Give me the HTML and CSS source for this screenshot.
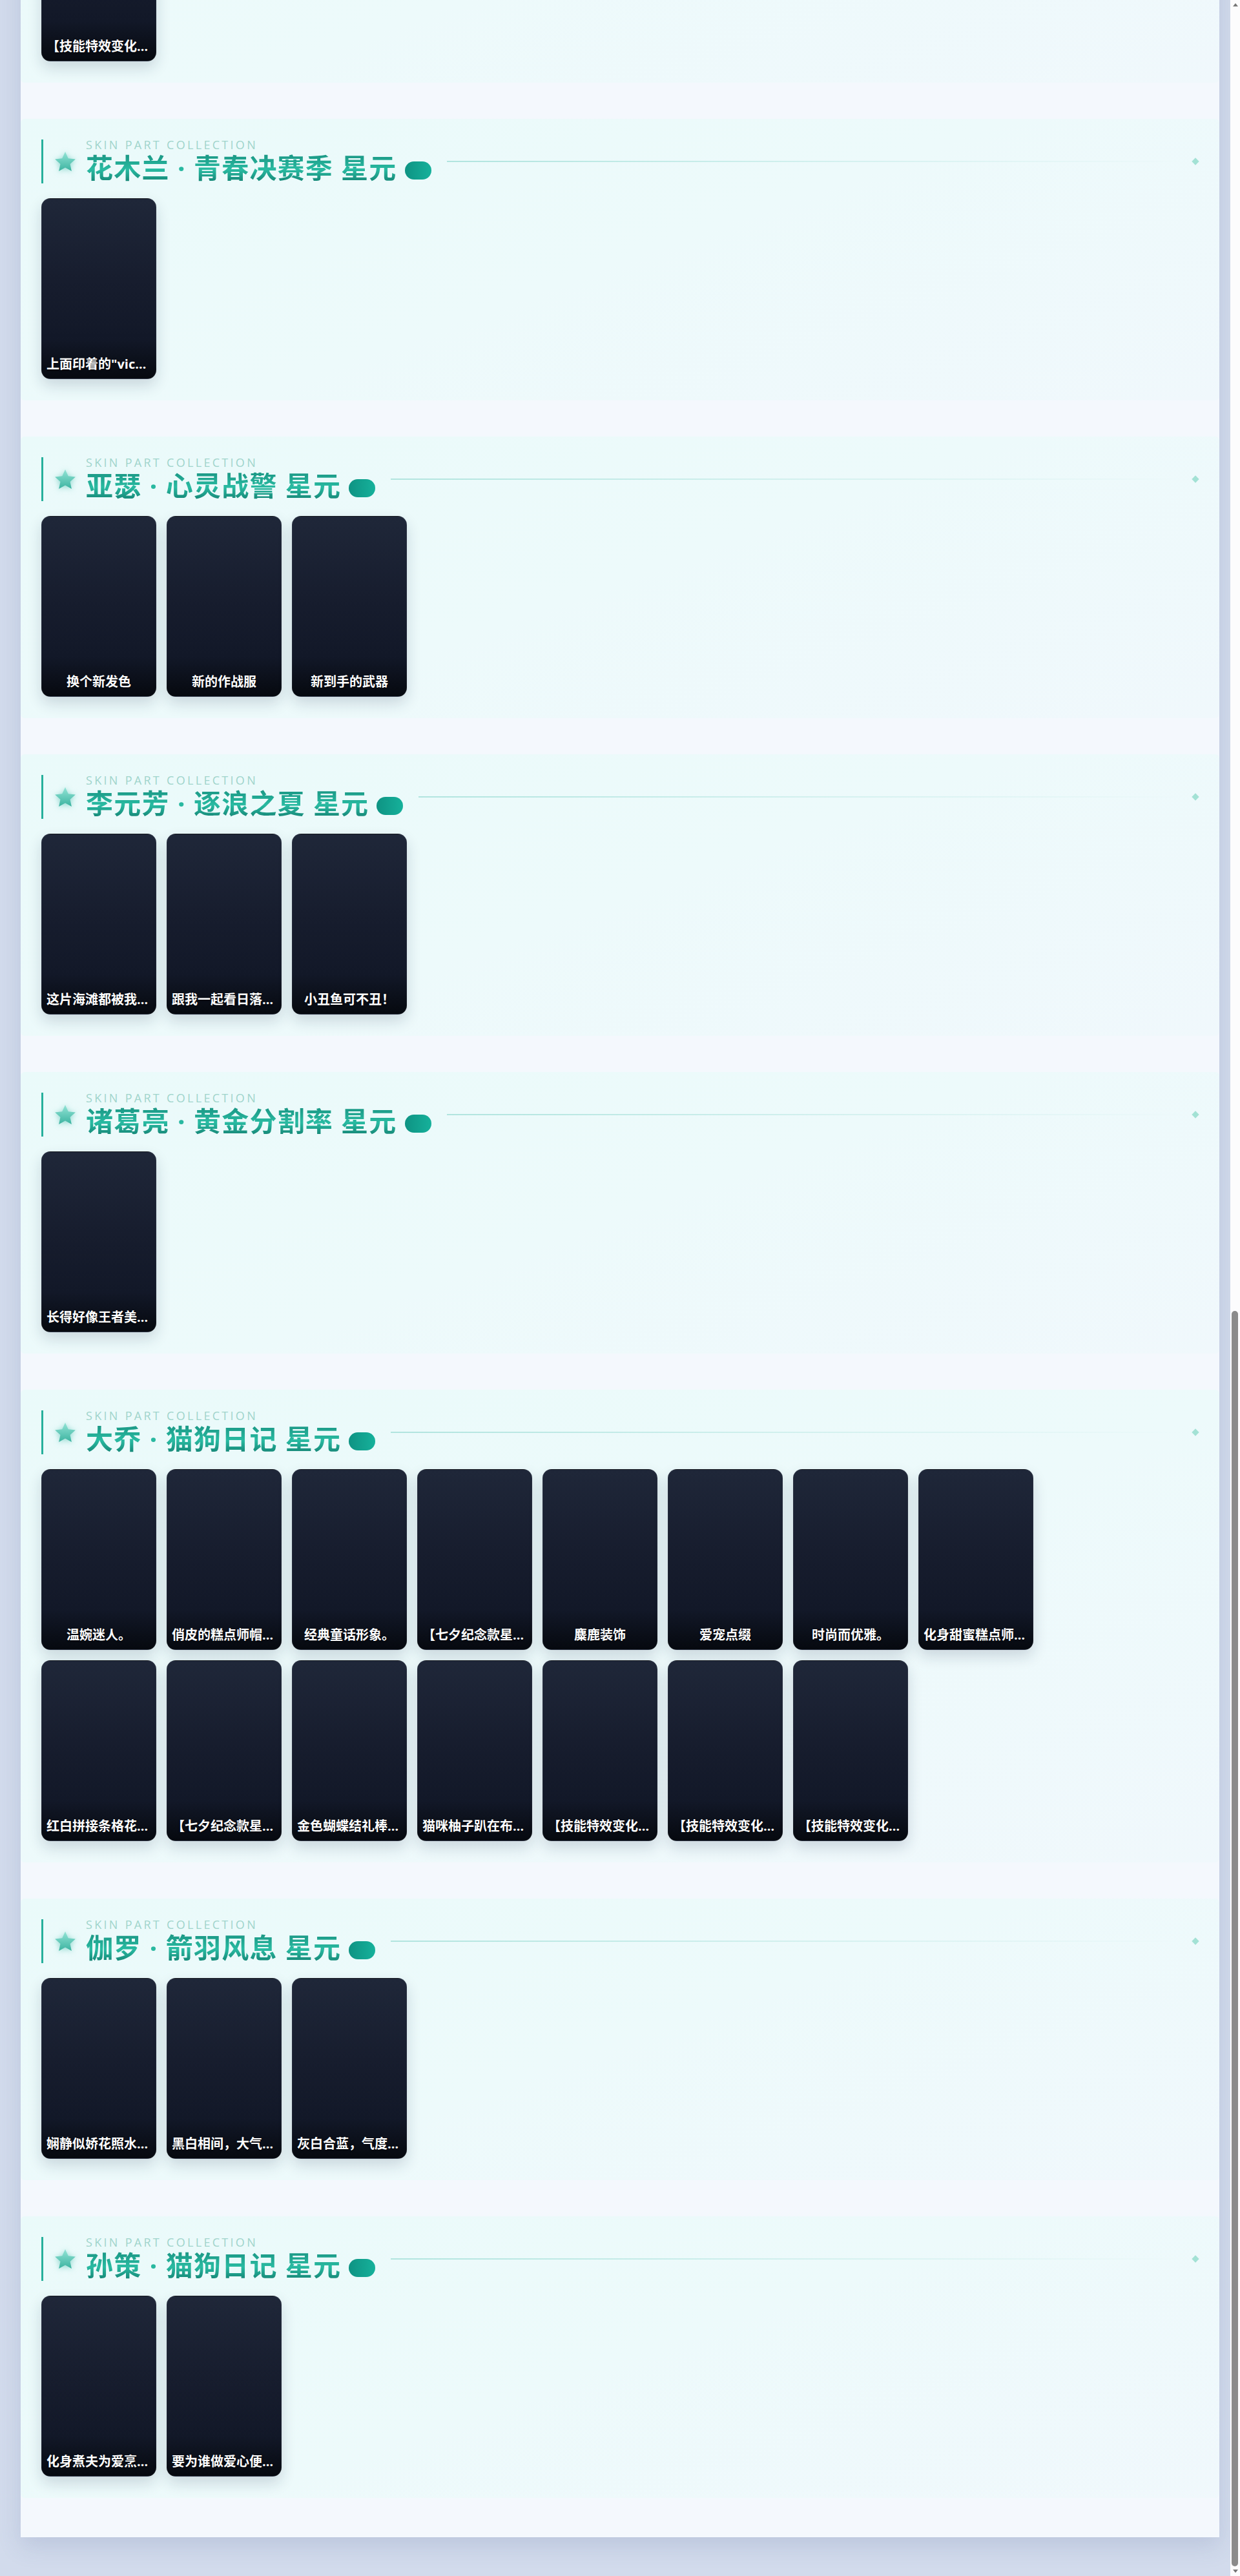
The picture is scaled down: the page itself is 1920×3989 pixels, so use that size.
FILE: index.html
```html
<!DOCTYPE html>
<html lang="zh-CN">
<head>
  <meta charset="UTF-8" />
  <meta name="viewport" content="width=device-width, initial-scale=1.0" />
  <title>星元部件图鉴</title>
  <link rel="stylesheet" href="styles.css">
</head>
<body>
  <!-- 星星图标共用的渐变 -->
  <svg class="defs" width="0" height="0" aria-hidden="true">
    <defs>
      <linearGradient id="starFill" x1="0" y1="0" x2="0" y2="1">
        <stop offset="0" stop-color="#93e4d6" />
        <stop offset="1" stop-color="#3cb3a0" />
      </linearGradient>
    </defs>
  </svg>

  <main class="panel" id="panel"></main>

  <!-- 自绘滚动条 -->
  <div class="scroll-rail" aria-hidden="true">
    <i class="scroll-arrow up"></i>
    <div class="scroll-track"><div class="scroll-thumb" id="thumb"></div></div>
    <i class="scroll-arrow down"></i>
  </div>

  <script>
    const panel = document.getElementById("panel");
    const thumb = document.getElementById("thumb");

    // 星元皮肤与部件列表
    const skins = [
      { title: "孙尚香 · 杀手不太冷 星元", parts: ["俏皮的猫耳发箍", "帅气的黑色风衣", "专属武器外观"] },
      { title: "貂蝉 · 仲夏夜之梦 星元", parts: ["梦幻的花瓣发饰", "轻盈的仙子长裙"] },
      { title: "小乔 · 缤纷独角兽 星元", parts: ["可爱的独角兽头饰", "彩虹色的蓬蓬裙", "星星魔法棒"] },
      { title: "王昭君 · 偶像歌手 星元", parts: ["闪亮的舞台发型", "华丽的演出服", "专属麦克风"] },
      { title: "李白 · 千年之狐 星元", parts: ["飘逸的狐狸面具", "青色长袍", "【技能特效变化】一技能"] },
      { title: "甄姬 · 游园惊梦 星元", parts: ["典雅的发簪", "水袖戏服", "折扇", "团扇", "珠花步摇", "云肩", "绣鞋", "【技能特效变化】一技能", "【技能特效变化】二技能"] },
      { title: "鲁班七号 · 电玩小子 星元", parts: ["炫酷的耳机", "游戏手柄", "像素风外套"] },
      { title: "公孙离 · 蜜橘之夏 星元", parts: ["【技能特效变化】大招"] },
      { title: "花木兰 · 青春决赛季 星元", parts: ['上面印着的"victory"字样'] },
      { title: "亚瑟 · 心灵战警 星元", parts: ["换个新发色", "新的作战服", "新到手的武器"] },
      { title: "李元芳 · 逐浪之夏 星元", parts: ["这片海滩都被我承包了", "跟我一起看日落的美景", "小丑鱼可不丑！"] },
      { title: "诸葛亮 · 黄金分割率 星元", parts: ["长得好像王者美少年"] },
      {
        title: "大乔 · 猫狗日记 星元",
        parts: [
          "温婉迷人。", "俏皮的糕点师帽子造型", "经典童话形象。", "【七夕纪念款星元】粉色爱心",
          "麋鹿装饰", "爱宠点缀", "时尚而优雅。", "化身甜蜜糕点师傅们",
          "红白拼接条格花裙子", "【七夕纪念款星元】蝴蝶结", "金色蝴蝶结礼棒魔杖", "猫咪柚子趴在布偶上",
          "【技能特效变化】一技能", "【技能特效变化】二技能", "【技能特效变化】大招"
        ]
      },
      { title: "伽罗 · 箭羽风息 星元", parts: ["娴静似娇花照水，行动如弱柳扶风", "黑白相间，大气优雅", "灰白合蓝，气度不凡"] },
      { title: "孙策 · 猫狗日记 星元", parts: ["化身煮夫为爱烹饪美食", "要为谁做爱心便当呢"] }
    ];

    const starIcon = `
      <svg class="skin-star" viewBox="2.5 2.5 19 17.9" aria-hidden="true">
        <path d="M12 2.5l2.8 6.1 6.7.7-5 4.5 1.4 6.6L12 17.1l-5.9 3.3 1.4-6.6-5-4.5 6.7-.7z" fill="url(#starFill)" />
      </svg>`;

    function renderSkins() {
      panel.innerHTML = skins.map(skin => `
        <section class="skin">
          <div class="skin-head">
            <div class="skin-mark">
              ${starIcon}
              <div class="skin-titles">
                <div class="skin-en">SKIN PART COLLECTION</div>
                <h2 class="skin-name"><span class="skin-name-text">${skin.title}</span><span class="skin-badge"></span></h2>
              </div>
            </div>
            <div class="skin-line"></div>
            <i class="skin-dot"></i>
          </div>
          <div class="skin-parts">
            ${skin.parts.map(p => `<div class="part"><span class="part-name">${p}</span></div>`).join("")}
          </div>
        </section>
      `).join("");
    }

    // 滚动条滑块的长度和位置
    function updateThumb() {
      const track = thumb.parentElement.clientHeight;
      const total = document.documentElement.scrollHeight;
      const view = window.innerHeight;
      const len = Math.max(24, track * view / total);
      const max = total - view;
      const top = max > 0 ? (track - len) * window.scrollY / max : 0;
      thumb.style.height = `${len}px`;
      thumb.style.top = `${top}px`;
    }

    // 打开后直接停在列表最底部
    function scrollToEnd() {
      window.scrollTo(0, document.documentElement.scrollHeight);
      updateThumb();
    }

    renderSkins();
    scrollToEnd();
    window.addEventListener("scroll", updateThumb);
    window.addEventListener("resize", updateThumb);
    window.addEventListener("load", scrollToEnd);
  </script>
</body>
</html>
```

FILE: styles.css
```css
html, body {
  margin: 0;
}

html {
  scrollbar-width: none;
}

body {
  background: #d2dbec;
  font-family: "Noto Sans CJK SC", sans-serif;
  padding: 32px 0 60px;
}

.defs {
  position: absolute;
  width: 0;
  height: 0;
}

/* 滚动条 */
.scroll-rail {
  position: fixed;
  top: 0;
  right: 0;
  bottom: 0;
  width: 15px;
  display: flex;
  flex-direction: column;
  background: #fcfcfd;
}

.scroll-track {
  flex: 1;
  position: relative;
}

.scroll-thumb {
  position: absolute;
  left: 2px;
  right: 3px;
  border-radius: 5px;
  background: #8b8b8b;
}

.scroll-arrow {
  height: 15px;
  display: flex;
  align-items: center;
  justify-content: center;
}

.scroll-arrow::before {
  content: "";
  border-left: 4px solid transparent;
  border-right: 4px solid transparent;
}

.scroll-arrow.up::before {
  border-bottom: 5px solid #777;
}

.scroll-arrow.down::before {
  border-top: 5px solid #777;
}

.panel {
  width: calc(100vw - 64px);
  margin-left: 32px;
  box-sizing: border-box;
  padding: 56px 0 61px;
  display: flex;
  flex-direction: column;
  gap: 56px;
  background: #f4f8fd;
  box-shadow: 0 14px 34px rgba(70, 90, 140, 0.16);
}

.skin {
  padding: 32px 31px 33px 32px;
  border-radius: 6px;
  background: linear-gradient(160deg, #eafafa 0%, #edfafb 50%, #f0f8fc 100%);
}

/* 标题行 */
.skin-head {
  display: flex;
  align-items: center;
  margin-bottom: 23px;
}

.skin-mark {
  display: flex;
  align-items: center;
  gap: 16px;
  border-left: 3px solid #27b09c;
  padding-left: 18px;
}

.skin-star {
  width: 32px;
  height: 30px;
  flex: none;
  filter: drop-shadow(0 1px 4px rgba(40, 180, 160, 0.5));
}

.skin-en {
  font-family: "Open Sans", sans-serif;
  font-size: 18px;
  line-height: 16px;
  letter-spacing: 3.3px;
  color: #9fd4cb;
  margin-bottom: 4px;
}

.skin-name {
  margin: 0;
  font-family: "Open Sans", "Noto Sans CJK SC", sans-serif;
  font-size: 42px;
  line-height: 48px;
  font-weight: 700;
  letter-spacing: 1.2px;
  white-space: nowrap;
}

.skin-name-text {
  background: linear-gradient(180deg, #168a7a 0%, #29bba2 55%, #0f7467 100%);
  -webkit-background-clip: text;
  background-clip: text;
  color: transparent;
}

.skin-badge {
  display: inline-block;
  width: 41px;
  height: 28px;
  margin-left: 12px;
  border-radius: 14px;
  vertical-align: -2px;
  background: linear-gradient(90deg, #0e9383, #16b19b);
}

.skin-line {
  flex: 1;
  height: 2px;
  margin: 0 10px 0 24px;
  background: linear-gradient(90deg, rgba(40, 178, 158, 0.3), rgba(40, 178, 158, 0.12) 55%, rgba(40, 178, 158, 0));
}

.skin-dot {
  flex: none;
  width: 8px;
  height: 8px;
  margin-right: 2px;
  background: #a3e2d5;
  transform: rotate(45deg);
}

/* 部件卡片 */
.skin-parts {
  display: grid;
  grid-template-columns: repeat(8, 178px);
  gap: 16px;
}

.part {
  width: 178px;
  height: 280px;
  box-sizing: border-box;
  display: flex;
  align-items: flex-end;
  padding: 0 7px 8px;
  border: 1px solid rgba(255, 255, 255, 0.06);
  border-radius: 14px;
  background: linear-gradient(180deg, #1f2739 0%, #171d2e 45%, #121828 78%, #06090f 100%);
  box-shadow: 0 10px 22px rgba(20, 40, 70, 0.16);
}

.part-name {
  width: 100%;
  text-align: center;
  white-space: nowrap;
  overflow: hidden;
  text-overflow: ellipsis;
  font-family: "Open Sans", "Noto Sans CJK SC", sans-serif;
  font-size: 20px;
  line-height: 28px;
  font-weight: 700;
  color: #fff;
  text-shadow: 0 1px 3px rgba(0, 0, 0, 0.6);
}
```
